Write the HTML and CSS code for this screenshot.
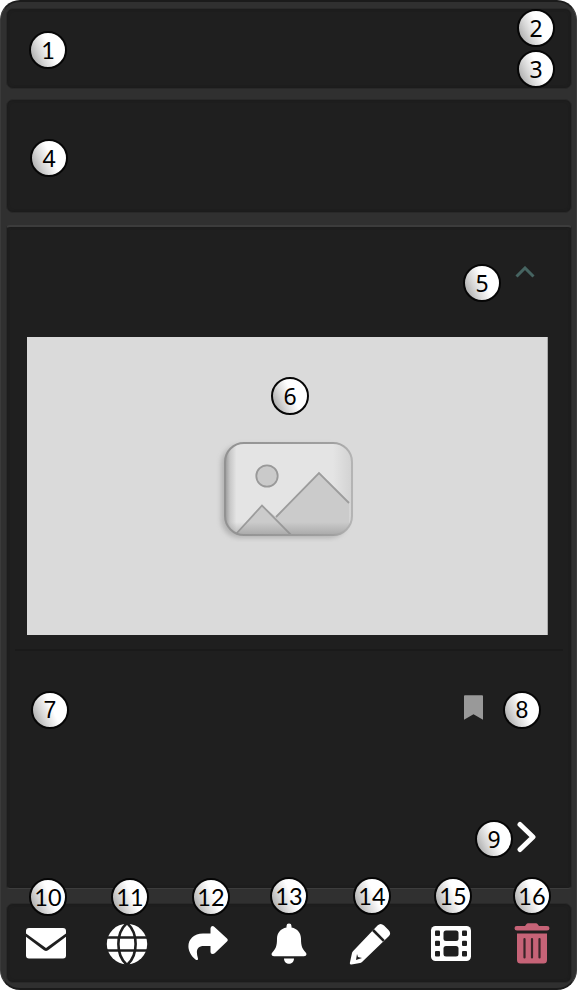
FILE: index.html
```html
<!DOCTYPE html>
<html lang="en">
<head>
<meta charset="utf-8">
<title>Card layout guide</title>
<link rel="stylesheet" href="styles.css">
</head>
<body>
<main class="device">
  <section class="panel header">
    <span class="badge b1 based">1</span><span class="badge b2">2</span><span class="badge b3">3</span>
  </section>
  <section class="panel summary"><span class="badge b4">4</span></section>
  <section class="panel content">
    <div class="content-head">
      <svg class="chevron-up" viewBox="0 0 20 12"><path d="M1.500 10.500 10 2l8.500 8.500"/></svg>
    </div>
    <div class="picture">
      <svg class="placeholder" viewBox="0 0 144 108">
        <defs>
          <linearGradient id="edge" x2="1"><stop offset="0" stop-color="#989898"/><stop offset=".04" stop-color="#c8c8c8"/><stop offset=".09" stop-color="#e4e4e4"/><stop offset=".85" stop-color="#e4e4e4"/><stop offset="1" stop-color="#d2d2d2"/></linearGradient>
          <linearGradient id="base" x2="0" y2="1"><stop offset=".86" stop-color="#888" stop-opacity="0"/><stop offset="1" stop-color="#888" stop-opacity=".5"/></linearGradient>
          <linearGradient id="rim" x2="1"><stop offset="0" stop-color="#929292"/><stop offset=".85" stop-color="#a0a0a0"/><stop offset="1" stop-color="#b4b4b4"/></linearGradient>
          <filter id="soft" x="-20%" y="-20%" width="140%" height="140%"><feGaussianBlur stdDeviation="2.500"/></filter>
          <clipPath id="frame"><rect x="9" y="9" width="127" height="92" rx="19"/></clipPath>
        </defs>
        <rect x="5" y="11" width="127" height="93" rx="19" fill="#999" opacity=".6" filter="url(#soft)"/>
        <rect x="9" y="9" width="127" height="92" rx="19" fill="url(#edge)"/>
        <g clip-path="url(#frame)">
          <path d="M20 101 46 71.500 60 83 103 39l30 30v40H20z" fill="#cbcbcb"/>
          <path d="M20 100 46 71.500 75 101M60 83 103 39l30 30" fill="none" stroke="#9c9c9c" stroke-width="1.800"/>
          <rect x="9" y="9" width="127" height="92" fill="url(#base)"/>
        </g>
        <circle cx="51" cy="42" r="10.700" fill="#cacaca" stroke="#999" stroke-width="1.800"/>
        <rect x="9" y="9" width="127" height="92" rx="19" fill="none" stroke="url(#rim)" stroke-width="2"/>
      </svg>
      <span class="badge b6">6</span>
    </div>
    <div class="divider"></div>
    <div class="bookmark-row">
      <svg class="bookmark" viewBox="0 0 20 26"><path d="M1 0h18q1 0 1 1v25l-10-6-10 6V1q0-1 1-1z" fill="#999"/></svg>
    </div>
    <div class="next-row">
      <svg class="next" viewBox="0 0 20 32"><path d="m3 3.500 13 12.500L3 28.500"/></svg>
    </div>
    <span class="badge b5">5</span><span class="badge b7 plain">7</span><span class="badge b8 plain">8</span><span class="badge b9">9</span>
  </section>
  <nav class="panel toolbar">
    <div class="tool">
      <svg viewBox="0 0 42 42"><path d="M4 5h34q3 0 3 3v2.500L21 25 1 10.500V8q0-3 3-3zM1 13.800l18 13.500q2 1.500 4 0L41 13.800v18.700q0 3-3 3H4q-3 0-3-3z"/></svg>
      <span class="badge b10 based">10</span>
    </div>
    <div class="tool">
      <svg viewBox="0 0 42 42"><circle cx="21" cy="21" r="20.200"/><path class="cut" d="M0 14.500h42M0 27.500h42M21 0C9.500 10 9.500 32 21 42M21 0c11.500 10 11.500 32 0 42"/></svg>
      <span class="badge b11 based">11</span>
    </div>
    <div class="tool">
      <svg viewBox="0 0 42 42"><path d="M23.500 5.500q0-2.500 2-2.500 1 0 2 1L40 15.500q1.500 1.500 0 3L28 30q-1 1-2.500 1-2 0-2-2v-6H17c-8 0-8 6-6 12.500.4 1.500-1.500 2-2.500 1C-4 26 1 10.500 16 10.500h7.500z"/></svg>
      <span class="badge b12 based">12</span>
    </div>
    <div class="tool">
      <svg viewBox="0 0 42 42"><path d="M21 .5q2.500 0 2.500 2.400v1.500c6 1 9.500 5.700 9.500 11.300 0 8 1.500 10 4.500 13.500 2 2.300.5 4-1.500 4H6c-2 0-3.500-1.700-1.500-4C7.500 25.700 9 23.700 9 15.700 9 10.100 12.500 5.400 18.500 4.400V2.900Q18.500.5 21 .5zM16 35.500h10c0 7-10 7-10 0z"/></svg>
      <span class="badge b13 based">13</span>
    </div>
    <div class="tool">
      <svg viewBox="0 0 42 42"><path d="M28.500 2.500q3-3 6.500 0l4.500 4.500q3.300 3.500 0 6.500L13 39q-1 .8-2 1l-8.500 1.500q-2 .3-1.600-1.800L3 30q.3-1.200 1.200-2z"/><path class="cut" d="m24 7 10.800 10.800"/><path class="hole" d="m8 31-1 6 6-2-4-1z"/></svg>
      <span class="badge b14 based">14</span>
    </div>
    <div class="tool">
      <svg viewBox="0 0 42 42"><rect x="1" y="3" width="40" height="35" rx="4.500"/><g class="hole"><rect x="13.500" y="7.500" width="15" height="10.500" rx="2.500"/><rect x="13.500" y="23" width="15" height="10.500" rx="2.500"/><rect x="5" y="7.500" width="5" height="5.500" rx="1"/><rect x="5" y="17.800" width="5" height="5.200" rx="1"/><rect x="5" y="28" width="5" height="5.500" rx="1"/><rect x="32" y="7.500" width="5" height="5.500" rx="1"/><rect x="32" y="17.800" width="5" height="5.200" rx="1"/><rect x="32" y="28" width="5" height="5.500" rx="1"/></g></svg>
      <span class="badge b15 based">15</span>
    </div>
    <div class="tool danger">
      <svg viewBox="0 0 42 42"><path d="M6 3h8l1.500-2q.5-.7 1.500-.7h8q1 0 1.500.7L28 3h8q2.500 0 2.500 2.200T36 7.500H6q-2.500 0-2.500-2.300T6 3zM6 10.500h30V37q0 3.500-3.500 3.500h-23Q6 40.500 6 37z"/><path class="slots" d="M13.500 16v18.500M21 16v18.500M28.500 16v18.500"/></svg>
      <span class="badge b16 based">16</span>
    </div>
  </nav>
</main>
</body>
</html>
```
FILE: styles.css
```css
* { box-sizing: border-box; }
body { margin: 0; background: #fff; font-family: "Noto Sans", sans-serif; }
.device {
  height: 990px;
  padding: 6px 4px 5px 5px;
  display: flex;
  flex-direction: column;
  gap: 10px;
  background: #303030;
  border: 2px solid #1b1b1b;
  border-left: 1px solid #3a3a3a;
  border-right: 1px solid #3a3a3a;
  border-radius: 20px;
}
.panel {
  position: relative;
  background: #1f1f1f;
  border: 1px solid #292929;
  border-radius: 7px;
  box-shadow: inset 0 0 3px #191919;
}
.header { height: 81px; }
.summary { height: 114px; }
.content { height: 664px; margin-top: 2px; border-top: 2px solid #3c3c3c; border-bottom-color: #3d3d3d; border-radius: 4px; }
.content-head { height: 110px; padding: 39px 36px 0 0; display: flex; justify-content: flex-end; }
.chevron-up { width: 20px; height: 12px; fill: none; stroke: #466461; stroke-width: 3; }
.picture {
  position: relative;
  height: 298px;
  margin: 0 23px 0 20px;
  padding-top: 97px;
  display: flex;
  justify-content: center;
  background: #dadada;
  border-right: 1px solid #aaa;
}
.placeholder { width: 144px; height: 108px; margin-left: 2px; }
.divider { height: 16px; margin: 0 8px; border-bottom: 2px solid #1a1a1a; }
.bookmark-row { height: 120px; padding: 44px 88px 0 0; display: flex; justify-content: flex-end; }
.bookmark { width: 19px; height: 25px; }
.next-row { padding: 50px 34px 0 0; display: flex; justify-content: flex-end; }
.next { width: 20px; height: 32px; fill: none; stroke: #fff; stroke-width: 5; stroke-linecap: round; stroke-linejoin: round; }
.toolbar { height: 80px; margin-top: 4px; padding: 19px 18px 0; display: flex; justify-content: space-between; }
.tool { position: relative; width: 42px; height: 42px; }
.tool svg { display: block; width: 42px; height: 42px; fill: #fff; }
.tool .cut { fill: none; stroke: #1f1f1f; stroke-width: 2.6; }
.tool .hole { fill: #1f1f1f; }
.danger svg { fill: #c66377; }
.danger .slots { fill: none; stroke: #3a2529; stroke-width: 2.2; stroke-linecap: round; }
.badge {
  position: absolute;
  width: 38px;
  height: 38px;
  border: 2px solid #060606;
  border-radius: 50%;
  background: linear-gradient(65deg, #aaa 8%, #d6d6d6 30%, #fff 56%);
  color: #000;
  font-size: 23px;
  line-height: 34px;
  text-align: center;
}
.based { font-family: Lato, sans-serif; font-size: 23.5px; }
.plain { font-family: "Liberation Sans", sans-serif; line-height: 35px; }
.b1 { left: 22px; top: 22px; }
.b2 { left: 510px; top: 0; }
.b3 { left: 510px; top: 41px; }
.b4 { left: 23px; top: 39px; }
.b5 { left: 456px; top: 37px; }
.b6 { left: 244px; top: 40px; }
.b7 { left: 24px; top: 464px; }
.b8 { left: 496px; top: 464px; }
.b9 { left: 468px; top: 593px; }
.b10, .b11, .b12 { top: -45px; }
.b13, .b14, .b15, .b16 { top: -46px; }
.b10, .b14, .b15 { left: 4px; }
.b11, .b12 { left: 5px; }
.b13, .b16 { left: 2px; }
```
